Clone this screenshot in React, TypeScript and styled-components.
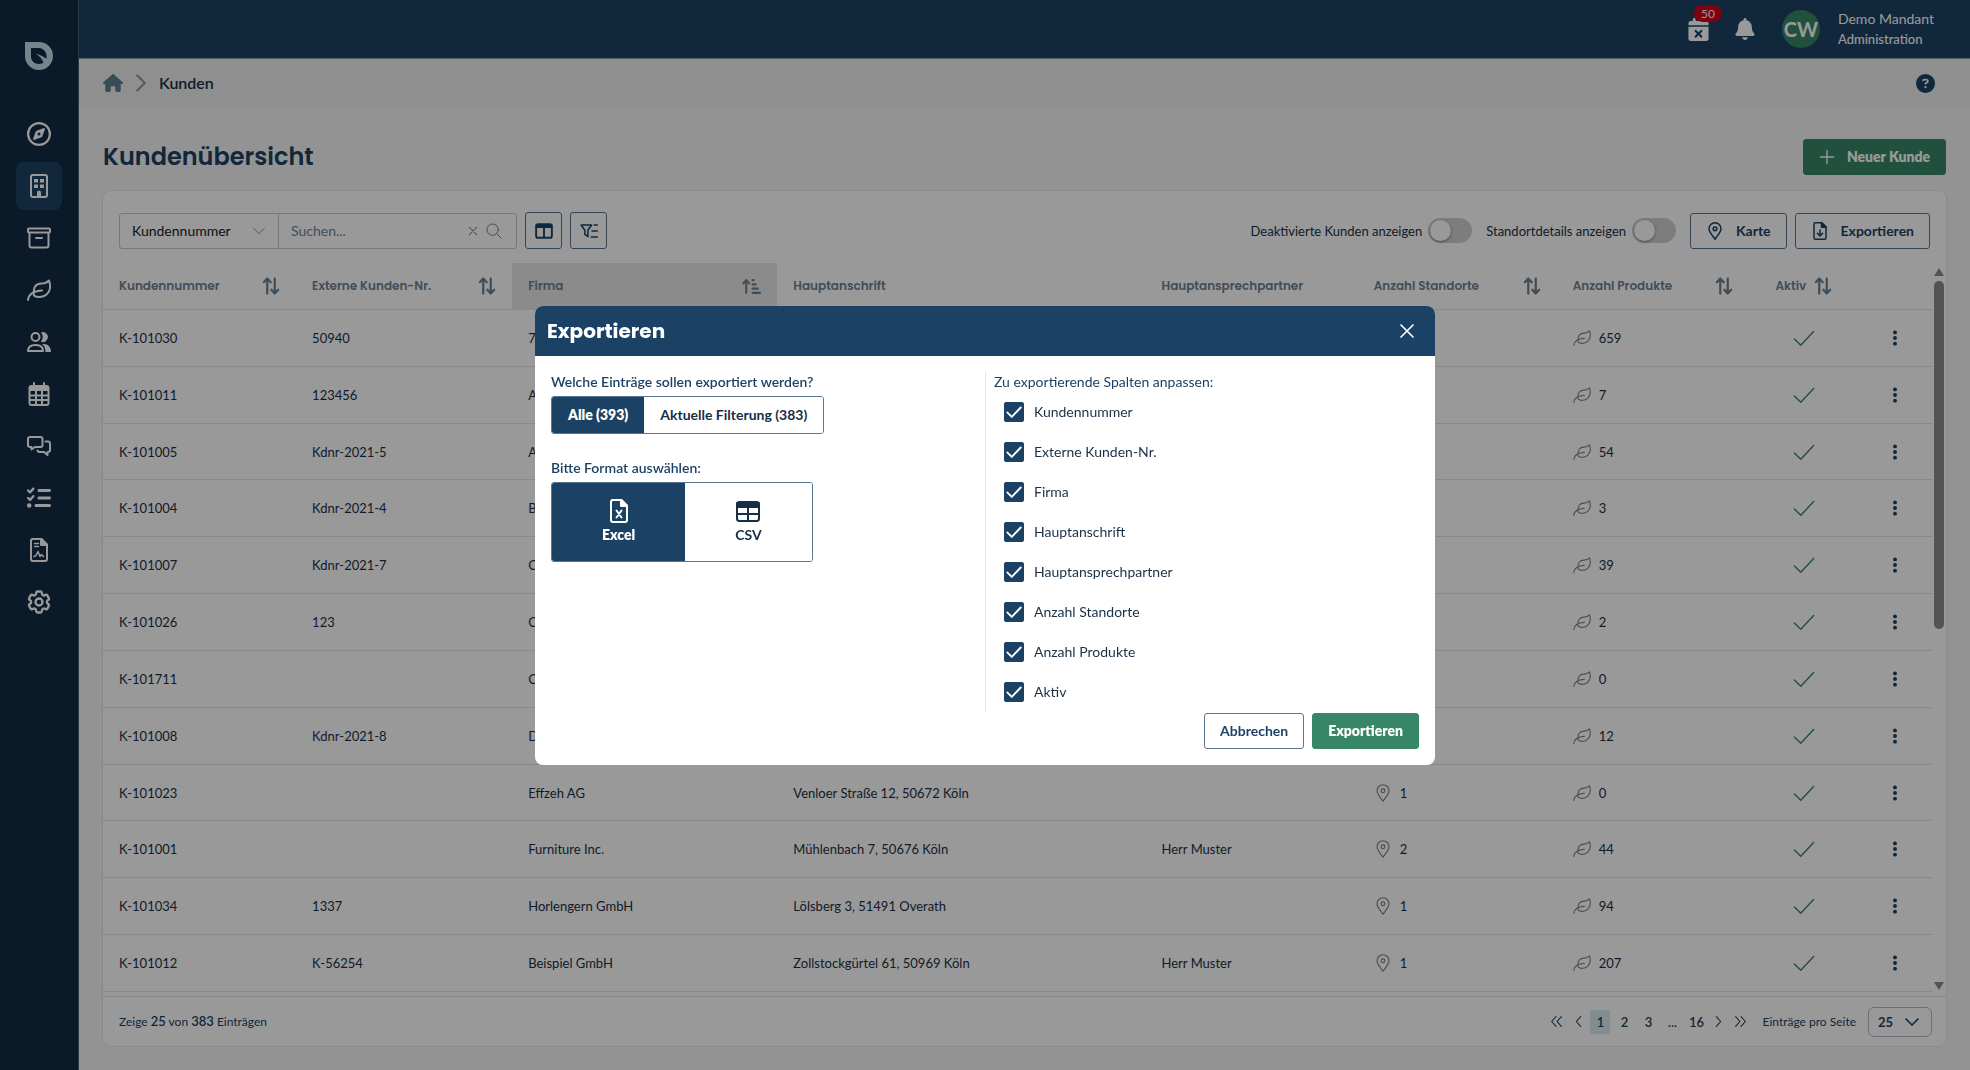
import React, { useState } from "react";
import styled, { createGlobalStyle } from "styled-components";
import {
  FaRegCompass,
  FaListCheck,
  FaHouse,
  FaCircleQuestion,
  FaBell,
  FaCalendarXmark,
  FaEllipsisVertical,
  FaArrowUpShortWide,
} from "react-icons/fa6";
import { HiOutlineCog6Tooth } from "react-icons/hi2";

const color = {
  navy: "#1b4264",
  ink: "#1b3045",
  rail: "#112c44",
  green: "#388668",
  muted: "#6c8296",
  line: "#e4e5e7",
  outline: "#5a7690",
};
const bodyFont = `Lato, "Open Sans", sans-serif`;
const headFont = `Poppins, Inter, sans-serif`;

const GlobalStyle = createGlobalStyle`
  *, *::before, *::after { box-sizing: border-box; }
  body { margin: 0; font: 14px/20px ${bodyFont}; color: ${color.ink}; background: #f5f5f5; }
  button, input, select { font: inherit; color: inherit; }
  button { cursor: pointer; }
  a { color: inherit; text-decoration: none; }
  svg { display: block; flex: none; }
`;

/* ---------- icons ---------- */

type IconProps = { size?: number; stroke?: number; children?: React.ReactNode };

const Glyph = ({ size = 24, stroke = 2, children }: IconProps) => (
  <svg
    width={size}
    height={size}
    viewBox="0 0 24 24"
    fill="none"
    stroke="currentColor"
    strokeWidth={stroke}
    strokeLinecap="round"
    strokeLinejoin="round"
    aria-hidden="true"
  >
    {children}
  </svg>
);

const Logo = () => (
  <svg width="28" height="28" viewBox="0 0 28 28" fill="currentColor" aria-hidden="true">
    <path
      fillRule="evenodd"
      d="M0 0H14A14 14 0 1 1 0 14ZM6 6V14.5C6 19 9.500 22 14 22C16 22 17.500 21.500 18.500 20.800C17.500 17.500 14.500 14 10.500 11.500C15 12.500 18.500 14.500 21.500 16.800C22.500 11 19 6 13.500 6Z"
    />
  </svg>
);
const Building = () => (
  <Glyph>
    <rect x="4" y="1" width="16" height="22" rx="2" />
    <path d="M12 22.500v-4" strokeWidth="4" />
    <path
      d="M7 5h4v3.500h-4zM13 5h4v3.500h-4zM7 10.500h4v3.500h-4zM13 10.500h4v3.500h-4z"
      fill="currentColor"
      stroke="none"
    />
  </Glyph>
);
const Archive = () => (
  <Glyph>
    <rect x="1" y="2.500" width="22" height="4" rx="1" />
    <path d="M2.500 7v12.500a2 2 0 0 0 2 2h15a2 2 0 0 0 2-2V7M9 12h6" />
  </Glyph>
);
const Leaf = ({ size, stroke }: IconProps) => (
  <Glyph size={size} stroke={stroke}>
    <path d="M1 22C1.500 17.500 5 13 15 12.500M7 17.500C5.500 9 9 5.500 15 5.500C18.500 5.500 20.500 4 22 2.500C23.500 7 23.500 13 19.500 16.500C16 19.500 10 20 7 17.500" />
  </Glyph>
);
const Users = () => (
  <Glyph>
    <circle cx="8.500" cy="7" r="4" />
    <path d="M1 21c0-4 3-6 7.500-6s7.500 2 7.500 6z" />
    <path
      d="M14 2.500a5 5 0 1 1 0 9.200a7 7 0 0 0 0-9.200zM17 14c4 0 7 3 7 8h-5.500c0-3.500-1-6-3.500-8z"
      fill="currentColor"
      stroke="none"
    />
  </Glyph>
);
const Calendar = () => (
  <Glyph>
    <rect x="2.500" y="4" width="19" height="19" rx="2" />
    <path d="M7 1v3M17 1v3" />
    <path d="M2.500 5h19v4h-19z" fill="currentColor" stroke="none" />
    <path d="M3 13.500h18M3 18h18M9 8v14M15 8v14" />
  </Glyph>
);
const Chats = () => (
  <Glyph>
    <path d="M3 3h10.500a2 2 0 0 1 2 2v6a2 2 0 0 1-2 2H8l-3.500 2.500V13H3a2 2 0 0 1-2-2V5a2 2 0 0 1 2-2z" />
    <path d="M18.500 7.500H21a2 2 0 0 1 2 2v6.500a2 2 0 0 1-2 2h-.5v3l-3.500-3h-4.500a2 2 0 0 1-2-1.500" />
  </Glyph>
);
const FilePath = () => (
  <>
    <path d="M5 1h9.500L20 6.500V21a2 2 0 0 1-2 2H6a2 2 0 0 1-2-2V3a2 2 0 0 1 2-2z" />
    <path d="M14 1v6h6z" fill="currentColor" />
  </>
);
const FileReport = () => (
  <Glyph>
    <FilePath />
    <path d="M7.500 5.500h4M7.500 8.500h4M7 18.500l2-1 2-4 2 5 1.500-2 2 2" strokeWidth="1.500" />
  </Glyph>
);
const FileExcel = () => (
  <Glyph>
    <FilePath />
    <path d="M9.500 11.500l5 7M14.500 11.500l-5 7" />
  </Glyph>
);
const FileDown = () => (
  <Glyph size={18}>
    <FilePath />
    <path d="M12 10.500v8M8.500 15l3.500 3.500 3.500-3.500" />
  </Glyph>
);
const Grid = () => (
  <Glyph>
    <rect x="1" y="3" width="22" height="19" rx="2.500" />
    <path d="M1 4h22v4H1z" fill="currentColor" />
    <path d="M1 15h22M12 8v13" />
  </Glyph>
);
const Columns = () => (
  <Glyph size={18}>
    <rect x="1.500" y="3" width="21" height="18" rx="2.500" strokeWidth="2.500" />
    <path d="M2 4h20v3H2z" fill="currentColor" />
    <path d="M12 7v13" strokeWidth="2.500" />
  </Glyph>
);
const FilterList = () => (
  <Glyph size={18}>
    <path d="M1.500 4h14l-5 7v8.500l-4-3V11z" />
    <path d="M19 4h4M16 12h7M15 20h8" />
  </Glyph>
);
const Pin = ({ size = 18, stroke = 2 }: IconProps) => (
  <Glyph size={size} stroke={stroke}>
    <path d="M12 23C9 18.500 4 13.500 4 9a8 8 0 0 1 16 0c0 4.500-5 9.500-8 14z" />
    <circle cx="12" cy="9" r="2.500" />
  </Glyph>
);
const Chevron = ({ size = 16, stroke = 2, d }: IconProps & { d: string }) => (
  <Glyph size={size} stroke={stroke}>
    <path d={d} />
  </Glyph>
);
const DOWN = "M3 7.500l9 9 9-9";
const SortBoth = () => (
  <Glyph size={18} stroke={3}>
    <path d="M7 22V2.500M2.500 7L7 2l4.500 5M17 2v19.500M12.500 17l4.500 5 4.500-5" />
  </Glyph>
);
const Search = () => (
  <Glyph size={16} stroke={1.500}>
    <circle cx="10" cy="10" r="8.500" />
    <path d="M16.500 16.500l6.500 6.500" />
  </Glyph>
);
const Cross = ({ size = 16, stroke = 2 }: IconProps) => (
  <Glyph size={size} stroke={stroke}>
    <path d="M3 3l18 18M21 3L3 21" />
  </Glyph>
);
const Plus = () => (
  <Glyph size={16}>
    <path d="M12 2v20M2 12h20" />
  </Glyph>
);
const Check = () => (
  <Glyph size={22} stroke={1.500}>
    <path d="M1.500 13l7 7L22.500 5" />
  </Glyph>
);

/* ---------- shell ---------- */

const Shell = styled.div`
  display: flex;
  min-height: 100vh;
`;
const Rail = styled.nav`
  display: flex;
  flex-direction: column;
  align-items: center;
  flex: none;
  width: 79px;
  padding-top: 42px;
  background: ${color.rail};
  border-right: 1px solid #4a6076;
`;
const LogoLink = styled.a`
  color: #c0dfe9;
  margin-bottom: 40px;
`;
const RailList = styled.ul`
  display: grid;
  gap: 4px;
  margin: 0;
  padding: 0;
  list-style: none;
`;
const RailLink = styled.a<{ $active?: boolean }>`
  display: grid;
  place-items: center;
  width: 46px;
  height: 48px;
  border-radius: 8px;
  color: #fff;
  background: ${(p) => (p.$active ? color.navy : "transparent")};
`;
const Main = styled.div`
  display: flex;
  flex-direction: column;
  flex: 1;
  min-width: 0;
`;
const TopBar = styled.header`
  display: flex;
  align-items: center;
  justify-content: flex-end;
  height: 59px;
  padding-right: 36px;
  background: ${color.navy};
  border-bottom: 1px solid #8fa6b8;
  color: #fff;
`;
const IconButton = styled.button`
  position: relative;
  display: grid;
  place-items: center;
  padding: 0;
  border: 0;
  background: none;
  color: inherit;
`;
const Alerts = styled.div`
  display: flex;
  gap: 24px;
  margin-right: 26px;
`;
const Badge = styled.span`
  position: absolute;
  top: -13px;
  left: 7px;
  padding: 0 7px;
  border-radius: 9px;
  background: #d5001c;
  font-size: 12px;
  line-height: 17px;
`;
const Avatar = styled.span`
  display: grid;
  place-items: center;
  width: 38px;
  height: 38px;
  margin-right: 18px;
  border-radius: 50%;
  background: ${color.green};
  font-size: 20px;
  font-weight: 700;
`;
const Account = styled.div`
  display: grid;
  font-size: 14px;
`;
const Role = styled.span`
  font-size: 13px;
  font-weight: 500;
`;
const Crumbs = styled.div`
  display: flex;
  align-items: center;
  justify-content: space-between;
  height: 48px;
  padding: 0 35px 0 24px;
  background: #eeeff1;
`;
const CrumbPath = styled.nav`
  display: flex;
  align-items: center;
  gap: 9px;
  font-size: 16px;
  font-weight: 600;
  color: ${color.ink};
`;
const HomeLink = styled.a`
  color: #5f7f8e;
`;
const CrumbSep = styled.span`
  color: #9a9a9a;
`;
const Page = styled.main`
  display: flex;
  flex-direction: column;
  flex: 1;
  padding: 32px 24px 24px;
`;
const TitleRow = styled.div`
  display: flex;
  align-items: center;
  justify-content: space-between;
  margin-bottom: 16px;
`;
const Title = styled.h1`
  margin: 0;
  color: ${color.navy};
  font: 600 24px/36px ${headFont};
`;
const Button = styled.button<{ $solid?: boolean; $wide?: boolean }>`
  display: flex;
  align-items: center;
  gap: ${(p) => (p.$wide ? "12px" : "8px")};
  height: 36px;
  padding: 0 15px;
  border: 1px solid ${(p) => (p.$solid ? color.green : color.outline)};
  border-radius: 3px;
  background: ${(p) => (p.$solid ? color.green : "transparent")};
  color: ${(p) => (p.$solid ? "#fff" : color.navy)};
  font-size: 14px;
  font-weight: ${(p) => (p.$solid ? 800 : 700)};
`;

/* ---------- card and toolbar ---------- */

const Card = styled.section`
  display: flex;
  flex-direction: column;
  flex: 1;
  border-radius: 8px;
  background: #fff;
  box-shadow: 0 0 0 1px ${color.line};
  overflow: hidden;
`;
const Toolbar = styled.div`
  display: flex;
  align-items: center;
  justify-content: space-between;
  padding: 21px 16px 14px;
`;
const Group = styled.div`
  display: flex;
  align-items: center;
  gap: 8px;
`;
const SearchBox = styled.div`
  display: flex;
  height: 36px;
  border: 1px solid #c4c8cc;
  border-radius: 3px;
  color: ${color.muted};
`;
const FieldSelect = styled.span`
  display: flex;
  align-items: center;
  width: 159px;
  padding-right: 12px;
  border-right: 1px solid #c4c8cc;
`;
const PlainSelect = styled.select`
  flex: 1;
  min-width: 0;
  height: 100%;
  padding: 0 0 0 12px;
  border: 0;
  background: none;
  appearance: none;
  color: #14202b;
`;
const SearchField = styled.span`
  display: flex;
  align-items: center;
  gap: 8px;
  width: 237px;
  padding: 0 14px 0 12px;
`;
const SearchInput = styled.input`
  flex: 1;
  min-width: 0;
  padding: 0;
  border: 0;
  background: none;
  &::placeholder { color: ${color.muted}; opacity: 1; }
`;
const SquareButton = styled.button`
  display: grid;
  place-items: center;
  width: 37px;
  height: 37px;
  padding: 0;
  border: 1px solid ${color.outline};
  border-radius: 3px;
  background: none;
  color: ${color.navy};
`;
const SwitchLabel = styled.label`
  display: flex;
  align-items: center;
  gap: 6px;
  margin-right: 6px;
  font-size: 13px;
`;
const Switch = styled.input`
  appearance: none;
  display: flex;
  width: 44px;
  height: 25px;
  margin: 0;
  padding: 2px;
  border-radius: 13px;
  background: #d0d0d0;
  &::before {
    content: "";
    width: 21px;
    height: 21px;
    border-radius: 50%;
    background: #fff;
    box-shadow: 0 1px 3px rgba(0, 0, 0, 0.4);
  }
`;

/* ---------- table ---------- */

const TableArea = styled.div`
  display: flex;
  flex: 1;
  padding-bottom: 4px;
`;
const TableHolder = styled.div`
  flex: 1;
  min-width: 0;
`;
const Table = styled.table`
  width: 100%;
  height: 100%;
  table-layout: fixed;
  border-collapse: separate;
  border-spacing: 0;
`;
const Th = styled.th<{ $sorted?: boolean }>`
  height: 47px;
  padding: 0 16px;
  border-bottom: 1px solid ${color.line};
  background: ${(p) => (p.$sorted ? "#e8e8e9" : "transparent")};
  color: ${color.muted};
  font: 600 12px/20px ${headFont};
  text-align: left;
  white-space: nowrap;
`;
const ThInner = styled.span<{ $center?: boolean }>`
  display: flex;
  align-items: center;
  justify-content: ${(p) => (p.$center ? "center" : "space-between")};
  gap: 8px;
`;
const Td = styled.td`
  height: 56px;
  padding: 0 16px;
  border-bottom: 1px solid ${color.line};
  font-size: 13px;
  white-space: nowrap;
`;
const Count = styled.span`
  display: flex;
  align-items: center;
  gap: 8px;
`;
const CountIcon = styled.span`
  color: #7d8286;
`;
const CenterIcon = styled.span<{ $tone: string }>`
  display: grid;
  justify-content: center;
  color: ${(p) => p.$tone};
`;
const ScrollTrack = styled.div`
  display: flex;
  flex-direction: column;
  align-items: center;
  width: 14px;
  padding: 5px 0 2px;
`;
const ScrollLane = styled.div`
  flex: 1;
  display: flex;
  margin: 5px 0;
`;
const ScrollThumb = styled.div`
  width: 10px;
  height: 50%;
  border-radius: 5px;
  background: #8a8a8a;
`;
const Arrow = styled.span<{ $up?: boolean }>`
  border: 5px solid transparent;
  border-${(p) => (p.$up ? "top" : "bottom")}-width: 0;
  border-${(p) => (p.$up ? "bottom" : "top")}: 8px solid #8a8a8a;
`;

/* ---------- card footer ---------- */

const CardFooter = styled.footer`
  display: flex;
  align-items: center;
  justify-content: space-between;
  height: 50px;
  padding: 0 14px 0 16px;
  border-top: 1px solid ${color.line};
  color: ${color.navy};
  font-size: 12px;
  b { font-size: 13px; font-weight: 600; }
`;
const Pager = styled.nav`
  display: flex;
  align-items: center;
  gap: 4px;
`;
const PageButton = styled.button<{ $current?: boolean; $narrow?: boolean }>`
  display: grid;
  place-items: center;
  min-width: ${(p) => (p.$narrow ? "16px" : "20px")};
  height: 24px;
  padding: 0;
  border: 0;
  border-radius: 2px;
  background: ${(p) => (p.$current ? "#d8ebef" : "none")};
  font-size: 13px;
  font-weight: 600;
`;
const PerPage = styled.label`
  display: flex;
  align-items: center;
  gap: 12px;
  margin-left: 8px;
`;
const PerPageSelect = styled.span`
  display: flex;
  align-items: center;
  width: 64px;
  height: 30px;
  padding-right: 11px;
  border: 1px solid #b4bbc2;
  border-radius: 6px;
  font-size: 13px;
  font-weight: 700;
  select { padding-left: 9px; color: ${color.navy}; }
`;

/* ---------- dialog ---------- */

const Overlay = styled.div`
  position: fixed;
  inset: 0;
  display: grid;
  place-items: center;
  background: rgba(0, 0, 0, 0.4);
`;
const Dialog = styled.div`
  width: min(900px, 92vw);
  border-radius: 8px;
  background: #fff;
  overflow: hidden;
`;
const DialogHead = styled.div`
  display: flex;
  align-items: center;
  justify-content: space-between;
  height: 50px;
  padding: 0 20px 0 12px;
  background: ${color.navy};
  color: #fff;
`;
const DialogTitle = styled.h2`
  margin: 0;
  font: 700 20px/30px ${headFont};
`;
const DialogBody = styled.div`
  display: grid;
  grid-template-columns: 1fr 1fr;
  padding: 16px 16px 1px;
`;
const Choices = styled.div`
  display: flex;
  flex-direction: column;
  align-items: flex-start;
`;
const Prompt = styled.p<{ $strong?: boolean }>`
  margin: 0;
  color: ${color.navy};
  font-size: 14px;
  line-height: 20px;
  font-weight: ${(p) => (p.$strong ? 600 : 400)};
`;
const Segments = styled.div`
  display: flex;
  margin: 4px 0 24px;
  border: 1px solid ${color.outline};
  border-radius: 3px;
  overflow: hidden;
`;
const Segment = styled.button<{ $on: boolean; $tall?: boolean }>`
  display: flex;
  flex-direction: column;
  align-items: center;
  justify-content: center;
  gap: 2px;
  height: ${(p) => (p.$tall ? "78px" : "36px")};
  padding: ${(p) => (p.$tall ? "0 50px" : "0 16px")};
  border: 0;
  background: ${(p) => (p.$on ? color.navy : "#fff")};
  color: ${(p) => (p.$on ? "#fff" : "#172e47")};
  font-size: 14px;
  font-weight: ${(p) => (p.$on ? 800 : 700)};
`;
const ColumnPick = styled.div`
  padding-left: 8px;
  border-left: 1px solid ${color.line};
`;
const CheckRow = styled.label`
  display: flex;
  align-items: center;
  gap: 10px;
  height: 40px;
  padding-left: 10px;
  font-size: 14px;
`;
const CheckCell = styled.span`
  display: grid;
  width: 20px;
  height: 20px;
  > * { grid-area: 1 / 1; }
  > svg { color: #fff; place-self: center; pointer-events: none; }
`;
const CheckInput = styled.input`
  appearance: none;
  width: 20px;
  height: 20px;
  margin: 0;
  border: 1px solid ${color.navy};
  border-radius: 2px;
  background: #fff;
  &:checked { background: ${color.navy}; }
`;
const DialogFoot = styled.div`
  display: flex;
  justify-content: flex-end;
  gap: 8px;
  padding: 0 16px 16px;
`;

/* ---------- data ---------- */

const railItems: [string, React.ReactNode][] = [
  ["dashboard", <FaRegCompass size={24} />],
  ["kunden", <Building />],
  ["archiv", <Archive />],
  ["produkte", <Leaf />],
  ["kontakte", <Users />],
  ["kalender", <Calendar />],
  ["chat", <Chats />],
  ["aufgaben", <FaListCheck size={24} />],
  ["berichte", <FileReport />],
  ["einstellungen", <HiOutlineCog6Tooth size={28} strokeWidth={2} />],
];

const headers: { label: string; width: number; sort?: "both" | "asc"; center?: boolean }[] = [
  { label: "Kundennummer", width: 193, sort: "both" },
  { label: "Externe Kunden-Nr.", width: 216, sort: "both" },
  { label: "Firma", width: 265, sort: "asc" },
  { label: "Hauptanschrift", width: 368 },
  { label: "Hauptansprechpartner", width: 212 },
  { label: "Anzahl Standorte", width: 199, sort: "both" },
  { label: "Anzahl Produkte", width: 192, sort: "both" },
  { label: "Aktiv", width: 110, sort: "both", center: true },
  { label: "", width: 73 },
];

type Row = [string, string, string, string, string, string, string];
const rows: Row[] = [
  ["K-101030", "50940", "7", "", "", "", "659"],
  ["K-101011", "123456", "A", "", "", "", "7"],
  ["K-101005", "Kdnr-2021-5", "A", "", "", "", "54"],
  ["K-101004", "Kdnr-2021-4", "B", "", "", "", "3"],
  ["K-101007", "Kdnr-2021-7", "C", "", "", "", "39"],
  ["K-101026", "123", "C", "", "", "", "2"],
  ["K-101711", "", "C", "", "", "", "0"],
  ["K-101008", "Kdnr-2021-8", "D", "", "", "", "12"],
  ["K-101023", "", "Effzeh AG", "Venloer Straße 12, 50672 Köln", "", "1", "0"],
  ["K-101001", "", "Furniture Inc.", "Mühlenbach 7, 50676 Köln", "Herr Muster", "2", "44"],
  ["K-101034", "1337", "Horlengern GmbH", "Lölsberg 3, 51491 Overath", "", "1", "94"],
  ["K-101012", "K-56254", "Beispiel GmbH", "Zollstockgürtel 61, 50969 Köln", "Herr Muster", "1", "207"],
];

const exportColumns = headers.filter((h) => h.label).map((h) => h.label);

/* ---------- sections ---------- */

const CustomerTable = () => (
  <TableArea>
    <TableHolder>
      <Table>
        <colgroup>
          {headers.map((h, i) => (
            <col key={i} width={h.width} />
          ))}
        </colgroup>
        <thead>
          <tr>
            {headers.map((h, i) => (
              <Th key={i} $sorted={h.sort === "asc"}>
                <ThInner $center={h.center}>
                  {h.label}
                  {h.sort === "both" && <SortBoth />}
                  {h.sort === "asc" && <FaArrowUpShortWide size={19} />}
                </ThInner>
              </Th>
            ))}
          </tr>
        </thead>
        <tbody>
          {rows.map(([id, ext, firm, address, contact, sites, products]) => (
            <tr key={id}>
              <Td>{id}</Td>
              <Td>{ext}</Td>
              <Td>{firm}</Td>
              <Td>{address}</Td>
              <Td>{contact}</Td>
              <Td>
                {sites && (
                  <Count>
                    <CountIcon><Pin stroke={1.500} /></CountIcon>
                    {sites}
                  </Count>
                )}
              </Td>
              <Td>
                <Count>
                  <CountIcon><Leaf size={18} stroke={1.500} /></CountIcon>
                  {products}
                </Count>
              </Td>
              <Td>
                <CenterIcon $tone={color.green}><Check /></CenterIcon>
              </Td>
              <Td>
                <CenterIcon $tone={color.navy}><FaEllipsisVertical size={18} /></CenterIcon>
              </Td>
            </tr>
          ))}
        </tbody>
      </Table>
    </TableHolder>
    <ScrollTrack>
      <Arrow $up />
      <ScrollLane><ScrollThumb /></ScrollLane>
      <Arrow />
    </ScrollTrack>
  </TableArea>
);

const Pagination = () => (
  <Pager>
    <PageButton><Chevron size={13} d="M11 3l-8 9 8 9M21 3l-8 9 8 9" /></PageButton>
    <PageButton $narrow><Chevron size={13} d="M16 3l-8 9 8 9" /></PageButton>
    <PageButton $current>1</PageButton>
    <PageButton>2</PageButton>
    <PageButton>3</PageButton>
    <PageButton>...</PageButton>
    <PageButton>16</PageButton>
    <PageButton $narrow><Chevron size={13} d="M8 3l8 9-8 9" /></PageButton>
    <PageButton><Chevron size={13} d="M3 3l8 9-8 9M13 3l8 9-8 9" /></PageButton>
    <PerPage>
      Einträge pro Seite
      <PerPageSelect>
        <PlainSelect defaultValue="25"><option>25</option></PlainSelect>
        <Chevron d={DOWN} stroke={2.500} />
      </PerPageSelect>
    </PerPage>
  </Pager>
);

const ExportDialog = ({ onClose }: { onClose: () => void }) => {
  const [scope, setScope] = useState("all");
  const [format, setFormat] = useState("excel");
  return (
    <Overlay>
      <Dialog role="dialog" aria-modal="true" aria-labelledby="export-title">
        <DialogHead>
          <DialogTitle id="export-title">Exportieren</DialogTitle>
          <IconButton onClick={onClose}><Cross size={16} stroke={2.500} /></IconButton>
        </DialogHead>
        <DialogBody>
          <Choices>
            <Prompt $strong>Welche Einträge sollen exportiert werden?</Prompt>
            <Segments>
              <Segment $on={scope === "all"} onClick={() => setScope("all")}>Alle (393)</Segment>
              <Segment $on={scope === "filter"} onClick={() => setScope("filter")}>
                Aktuelle Filterung (383)
              </Segment>
            </Segments>
            <Prompt $strong>Bitte Format auswählen:</Prompt>
            <Segments>
              <Segment $tall $on={format === "excel"} onClick={() => setFormat("excel")}>
                <FileExcel />
                Excel
              </Segment>
              <Segment $tall $on={format === "csv"} onClick={() => setFormat("csv")}>
                <Grid />
                CSV
              </Segment>
            </Segments>
          </Choices>
          <ColumnPick>
            <Prompt>Zu exportierende Spalten anpassen:</Prompt>
            {exportColumns.map((name) => (
              <CheckRow key={name}>
                <CheckCell>
                  <CheckInput type="checkbox" defaultChecked />
                  <Glyph size={18} stroke={2.500}><path d="M3 12.500l6 6L21 6" /></Glyph>
                </CheckCell>
                {name}
              </CheckRow>
            ))}
          </ColumnPick>
        </DialogBody>
        <DialogFoot>
          <Button onClick={onClose}>Abbrechen</Button>
          <Button $solid>Exportieren</Button>
        </DialogFoot>
      </Dialog>
    </Overlay>
  );
};

export default function App() {
  const [open, setOpen] = useState(true);
  return (
    <>
      <GlobalStyle />
      <Shell>
        <Rail>
          <LogoLink href="#start"><Logo /></LogoLink>
          <RailList>
            {railItems.map(([key, icon]) => (
              <li key={key}>
                <RailLink href={`#${key}`} $active={key === "kunden"}>{icon}</RailLink>
              </li>
            ))}
          </RailList>
        </Rail>
        <Main>
          <TopBar>
            <Alerts>
              <IconButton>
                <FaCalendarXmark size={23} />
                <Badge>50</Badge>
              </IconButton>
              <IconButton><FaBell size={22} /></IconButton>
            </Alerts>
            <Avatar>CW</Avatar>
            <Account>
              Demo Mandant
              <Role>Administration</Role>
            </Account>
          </TopBar>
          <Crumbs>
            <CrumbPath>
              <HomeLink href="#start"><FaHouse size={20} /></HomeLink>
              <CrumbSep><Chevron size={18} stroke={3} d="M7 2l10 10L7 22" /></CrumbSep>
              Kunden
            </CrumbPath>
            <IconButton><FaCircleQuestion size={19} color={color.navy} /></IconButton>
          </Crumbs>
          <Page>
            <TitleRow>
              <Title>Kundenübersicht</Title>
              <Button $solid $wide><Plus />Neuer Kunde</Button>
            </TitleRow>
            <Card>
              <Toolbar>
                <Group>
                  <SearchBox>
                    <FieldSelect>
                      <PlainSelect aria-label="Suchfeld" defaultValue="Kundennummer">
                        <option>Kundennummer</option>
                      </PlainSelect>
                      <Chevron d={DOWN} size={14} stroke={1.500} />
                    </FieldSelect>
                    <SearchField>
                      <SearchInput placeholder="Suchen..." />
                      <Cross size={10} stroke={2.500} />
                      <Search />
                    </SearchField>
                  </SearchBox>
                  <SquareButton><Columns /></SquareButton>
                  <SquareButton><FilterList /></SquareButton>
                </Group>
                <Group>
                  <SwitchLabel>
                    Deaktivierte Kunden anzeigen
                    <Switch type="checkbox" role="switch" />
                  </SwitchLabel>
                  <SwitchLabel>
                    Standortdetails anzeigen
                    <Switch type="checkbox" role="switch" />
                  </SwitchLabel>
                  <Button $wide><Pin />Karte</Button>
                  <Button $wide onClick={() => setOpen(true)}><FileDown />Exportieren</Button>
                </Group>
              </Toolbar>
              <CustomerTable />
              <CardFooter>
                <span>Zeige <b>25</b> von <b>383</b> Einträgen</span>
                <Pagination />
              </CardFooter>
            </Card>
          </Page>
        </Main>
      </Shell>
      {open && <ExportDialog onClose={() => setOpen(false)} />}
    </>
  );
}
